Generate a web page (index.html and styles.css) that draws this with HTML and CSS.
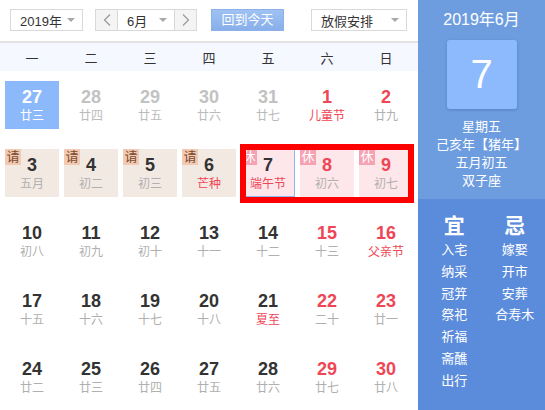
FILE: index.html
```html
<!DOCTYPE html>
<html lang="zh">
<head>
<meta charset="utf-8">
<link rel="stylesheet" href="styles.css">
</head>
<body>
<div class="cal">
  <div class="main">
    <div class="toolbar">
      <div class="select year"><span>2019年</span><i class="tri"></i></div>
      <div class="month">
        <div class="nav"><svg width="8" height="12" viewBox="0 0 8 12"><polyline points="7,0.5 1.5,6 7,11.5" fill="none" stroke="#999" stroke-width="1.2"/></svg></div>
        <div class="mid"><span>6月</span><i class="tri"></i></div>
        <div class="nav"><svg width="8" height="12" viewBox="0 0 8 12"><polyline points="1,0.5 6.5,6 1,11.5" fill="none" stroke="#999" stroke-width="1.2"/></svg></div>
      </div>
      <div class="today-btn">回到今天</div>
      <div class="select holiday"><span>放假安排</span><i class="tri"></i></div>
    </div>
    <div class="weekdays">
      <span>一</span><span>二</span><span>三</span><span>四</span><span>五</span><span>六</span><span>日</span>
    </div>
    <div class="grid">
      <div class="cell sel"><b>27</b><em>廿三</em></div>
      <div class="cell other"><b>28</b><em>廿四</em></div>
      <div class="cell other"><b>29</b><em>廿五</em></div>
      <div class="cell other"><b>30</b><em>廿六</em></div>
      <div class="cell other"><b>31</b><em>廿七</em></div>
      <div class="cell we"><b>1</b><em class="fest">儿童节</em></div>
      <div class="cell we"><b>2</b><em>廿九</em></div>

      <div class="cell work"><i class="badge">请</i><b>3</b><em>五月</em></div>
      <div class="cell work"><i class="badge">请</i><b>4</b><em>初二</em></div>
      <div class="cell work"><i class="badge">请</i><b>5</b><em>初三</em></div>
      <div class="cell work"><i class="badge">请</i><b>6</b><em class="fest">芒种</em></div>
      <div class="cell rest today"><i class="badge">休</i><b>7</b><em class="fest">端午节</em></div>
      <div class="cell rest we"><i class="badge">休</i><b>8</b><em>初六</em></div>
      <div class="cell rest we"><i class="badge">休</i><b>9</b><em>初七</em></div>

      <div class="cell"><b>10</b><em>初八</em></div>
      <div class="cell"><b>11</b><em>初九</em></div>
      <div class="cell"><b>12</b><em>初十</em></div>
      <div class="cell"><b>13</b><em>十一</em></div>
      <div class="cell"><b>14</b><em>十二</em></div>
      <div class="cell we"><b>15</b><em>十三</em></div>
      <div class="cell we"><b>16</b><em class="fest">父亲节</em></div>

      <div class="cell"><b>17</b><em>十五</em></div>
      <div class="cell"><b>18</b><em>十六</em></div>
      <div class="cell"><b>19</b><em>十七</em></div>
      <div class="cell"><b>20</b><em>十八</em></div>
      <div class="cell"><b>21</b><em class="fest">夏至</em></div>
      <div class="cell we"><b>22</b><em>二十</em></div>
      <div class="cell we"><b>23</b><em>廿一</em></div>

      <div class="cell"><b>24</b><em>廿二</em></div>
      <div class="cell"><b>25</b><em>廿三</em></div>
      <div class="cell"><b>26</b><em>廿四</em></div>
      <div class="cell"><b>27</b><em>廿五</em></div>
      <div class="cell"><b>28</b><em>廿六</em></div>
      <div class="cell we"><b>29</b><em>廿七</em></div>
      <div class="cell we"><b>30</b><em>廿八</em></div>
    </div>
    <div class="mark"></div>
  </div>
  <div class="side">
    <div class="side-top">
      <div class="ym">2019年6月</div>
      <div class="bigday">7</div>
      <div class="info">
        <div>星期五</div>
        <div>己亥年【猪年】</div>
        <div>五月初五</div>
        <div>双子座</div>
      </div>
    </div>
    <div class="side-bottom">
      <div class="col">
        <div class="head">宜</div>
        <div>入宅</div><div>纳采</div><div>冠笄</div><div>祭祀</div><div>祈福</div><div>斋醮</div><div>出行</div>
      </div>
      <div class="col">
        <div class="head">忌</div>
        <div>嫁娶</div><div>开市</div><div>安葬</div><div>合寿木</div>
      </div>
    </div>
  </div>
</div>
</body>
</html>
```

FILE: styles.css
```css
* { box-sizing: border-box; }
html, body { margin: 0; padding: 0; background: #fff; }
body {
  font-family: "Liberation Sans", "Noto Sans CJK SC", sans-serif;
  color: #333;
  width: 545px;
  height: 410px;
  overflow: hidden;
}
.cal { display: flex; height: 410px; }
.main { width: 418px; position: relative; }

.toolbar {
  height: 41px;
  display: flex;
  align-items: flex-start;
  padding: 9px 0 0 10px;
  font-size: 13px;
}
.select {
  height: 22px;
  border: 1px solid #d9d9d9;
  display: flex;
  align-items: center;
  justify-content: space-between;
  padding: 0 7px 0 9px;
  color: #333;
  background: #fff;
}
.year { width: 73px; }
.holiday { width: 96px; margin-left: 27px; }
.tri {
  width: 0; height: 0;
  border-left: 4px solid transparent;
  border-right: 4px solid transparent;
  border-top: 4px solid #a8a8a8;
}
.month {
  margin-left: 12px;
  height: 22px;
  display: flex;
  border: 1px solid #d9d9d9;
}
.month .nav {
  width: 21px;
  background: #f4f4f4;
  display: flex;
  align-items: center;
  justify-content: center;
}
.month .mid {
  width: 58px;
  border-left: 1px solid #d9d9d9;
  border-right: 1px solid #d9d9d9;
  display: flex;
  align-items: center;
  justify-content: space-between;
  padding: 0 7px 0 9px;
}
.today-btn {
  margin-left: 14px;
  width: 73px;
  height: 22px;
  line-height: 20px;
  text-align: center;
  color: #fff;
  background: linear-gradient(#9fc2f3, #88afea);
  border: 1px solid #8cb1ea;
}

.weekdays {
  height: 30px;
  border-top: 2px solid #e2e2e2;
  background: #f5f8fe;
  display: grid;
  grid-template-columns: repeat(7, 54px);
  column-gap: 5px;
  padding-left: 5px;
  align-items: center;
  font-size: 13px;
  color: #333;
}
.weekdays span { text-align: center; }

.grid {
  display: grid;
  grid-template-columns: repeat(7, 54px);
  grid-auto-rows: 48px;
  column-gap: 5px;
  row-gap: 20px;
  padding: 10px 0 0 5px;
}
.cell {
  position: relative;
  text-align: center;
  padding-top: 6px;
}
.cell b {
  display: block;
  font-weight: bold;
  font-size: 18px;
  line-height: 20px;
  color: #333;
}
.cell em {
  display: block;
  font-style: normal;
  font-size: 12px;
  line-height: 18px;
  color: #b0b0b0;
}
.cell.we b { color: #ef4656; }
.cell em.fest { color: #ef4656; }
.cell.other b { color: #c2c2c2; }
.cell.other em { color: #bbbbbb; }
.cell.sel { background: #8cb9fb; }
.cell.sel b, .cell.sel em { color: #fff; }
.cell.work { background: #f3e9e3; }
.cell.rest { background: #fde7eb; }
.cell.today { border: 1px solid #8db6f0; padding-top: 5px; }
.badge {
  position: absolute;
  left: 0; top: 0;
  width: 16px; height: 16px;
  font-style: normal;
  font-size: 13px;
  line-height: 16px;
  text-align: center;
}
.work .badge { background: #f2cab3; color: #7a4a2e; }
.rest .badge { background: #f6a2b2; color: #fff; }
.today .badge { left: -1px; top: -1px; }

.mark {
  position: absolute;
  left: 240px;
  top: 144px;
  width: 174px;
  height: 59px;
  border: 6px solid #ff0000;
}

.side {
  flex: 1;
  display: flex;
  flex-direction: column;
  color: #fff;
}
.side-top {
  height: 199px;
  background: #6d9ddf;
  padding-top: 10px;
  display: flex;
  flex-direction: column;
  align-items: center;
}
.ym { font-size: 16px; line-height: 20px; }
.bigday {
  margin-top: 10px;
  width: 70px;
  height: 69px;
  border-radius: 3px;
  background: #8dbafd;
  box-shadow: 0 1px 3px rgba(40, 80, 150, 0.35);
  font-size: 40px;
  line-height: 69px;
  text-align: center;
}
.info {
  margin-top: 9px;
  font-size: 13px;
  line-height: 18px;
  text-align: center;
}
.side-bottom {
  flex: 1;
  background: #5b8cdb;
  display: grid;
  grid-template-columns: 1fr 1fr;
  padding: 14px 0 0 6px;
  align-content: start;
}
.col { text-align: center; font-size: 13px; line-height: 21.8px; }
.col .head { font-size: 21px; font-weight: bold; line-height: 26px; }
```
